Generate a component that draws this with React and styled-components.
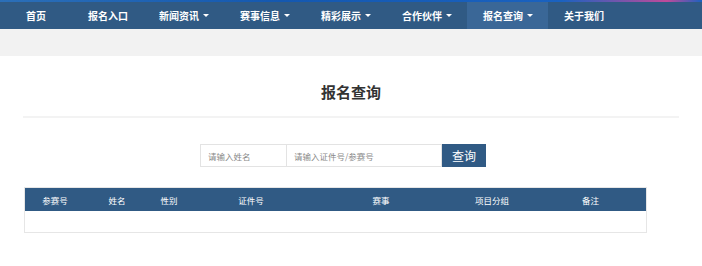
import styled, { createGlobalStyle } from "styled-components"

const GlobalStyle = createGlobalStyle`
    body {
        margin: 0;
        background: #fff;
        font-family: "Noto Sans CJK SC", "Noto Sans", sans-serif;
    }
`;

const navItems = [
    { label: "首页" },
    { label: "报名入口" },
    { label: "新闻资讯", drop: true },
    { label: "赛事信息", drop: true },
    { label: "精彩展示", drop: true },
    { label: "合作伙伴", drop: true },
    { label: "报名查询", drop: true, active: true },
    { label: "关于我们" },
];

const columns = [
    { title: "参赛号", w: 60 },
    { title: "姓名", w: 64 },
    { title: "性别", w: 40 },
    { title: "证件号", w: 124 },
    { title: "赛事", w: 136 },
    { title: "项目分组", w: 86 },
    { title: "备注", w: 111 },
];

export default function App() {
    return (
        <>
            <GlobalStyle/>
            <Banner/>
            <Nav>
                {navItems.map((item, i) => (
                    <NavItem key={item.label} $active={item.active} $first={i === 0}>
                        {item.label}
                        {item.drop && <Caret/>}
                    </NavItem>
                ))}
            </Nav>
            <GrayBand/>
            <Main>
                <Title>报名查询</Title>
                <Divider/>
                <SearchRow>
                    <NameInput placeholder="请输入姓名"/>
                    <IdInput placeholder="请输入证件号/参赛号"/>
                    <SearchButton>查询</SearchButton>
                </SearchRow>
                <Table>
                    <thead>
                        <tr>
                            {columns.map(c => (
                                <Th key={c.title} style={{ width: c.w }}>{c.title}</Th>
                            ))}
                        </tr>
                    </thead>
                    <tbody>
                        <tr>
                            <Td colSpan={columns.length}></Td>
                        </tr>
                    </tbody>
                </Table>
            </Main>
        </>
    )
}

const Banner = styled.div`
    height: 2px;
    background: linear-gradient(90deg, #2b6fb8 0%, #1458b0 40%, #1a62c0 80%, #c04a9a 95%, #1a62c0 100%);
`;

const Nav = styled.div`
    display: flex;
    height: 27px;
    background: #305a84;
`;

const NavItem = styled.div`
    display: flex;
    align-items: center;
    gap: 4px;
    padding: ${p => p.$first ? "0 26px" : "0 15px 0 16px"};
    background: ${p => p.$active ? "#3a6797" : "transparent"};
    color: #fff;
    font-size: 10px;
    font-weight: 700;
    cursor: pointer;
`;

const Caret = styled.span`
    width: 0;
    height: 0;
    border-left: 3px solid transparent;
    border-right: 3px solid transparent;
    border-top: 3px solid #fff;
`;

const GrayBand = styled.div`
    height: 27px;
    background: #f2f2f2;
`;

const Main = styled.div`
    width: 656px;
    margin: 0 auto;
    display: flex;
    flex-direction: column;
`;

const Title = styled.h2`
    margin: 24px 0 0;
    height: 24px;
    line-height: 24px;
    text-align: center;
    font-size: 15px;
    font-weight: 700;
    color: #333;
`;

const Divider = styled.div`
    margin-top: 12px;
    height: 2px;
    background: #f3f3f3;
`;

const SearchRow = styled.div`
    display: flex;
    margin: 26px 0 0 177px;
    height: 23px;
`;

const BaseInput = styled.input`
    box-sizing: border-box;
    height: 23px;
    padding: 0 7px;
    border: 1px solid #e3e3e3;
    outline: none;
    font-family: inherit;
    font-size: 8.5px;
    color: #333;
    &::placeholder { color: #8a8a8a; }
`;

const NameInput = styled(BaseInput)`
    width: 86px;
    border-right: none;
`;

const IdInput = styled(BaseInput)`
    width: 156px;
`;

const SearchButton = styled.button`
    width: 44px;
    height: 23px;
    border: none;
    background: #305a84;
    color: #fff;
    font-family: inherit;
    font-size: 12px;
    padding: 0;
`;

const Table = styled.table`
    margin: 20px 0 0 1px;
    width: 621px;
    border-collapse: collapse;
    border: 1px solid #e6e6e6;
    table-layout: fixed;
`;

const Th = styled.th`
    height: 23px;
    padding: 0;
    background: #305a84;
    color: #fff;
    font-size: 8.5px;
    font-weight: 400;
    text-align: center;
`;

const Td = styled.td`
    height: 21px;
    padding: 0;
`;
